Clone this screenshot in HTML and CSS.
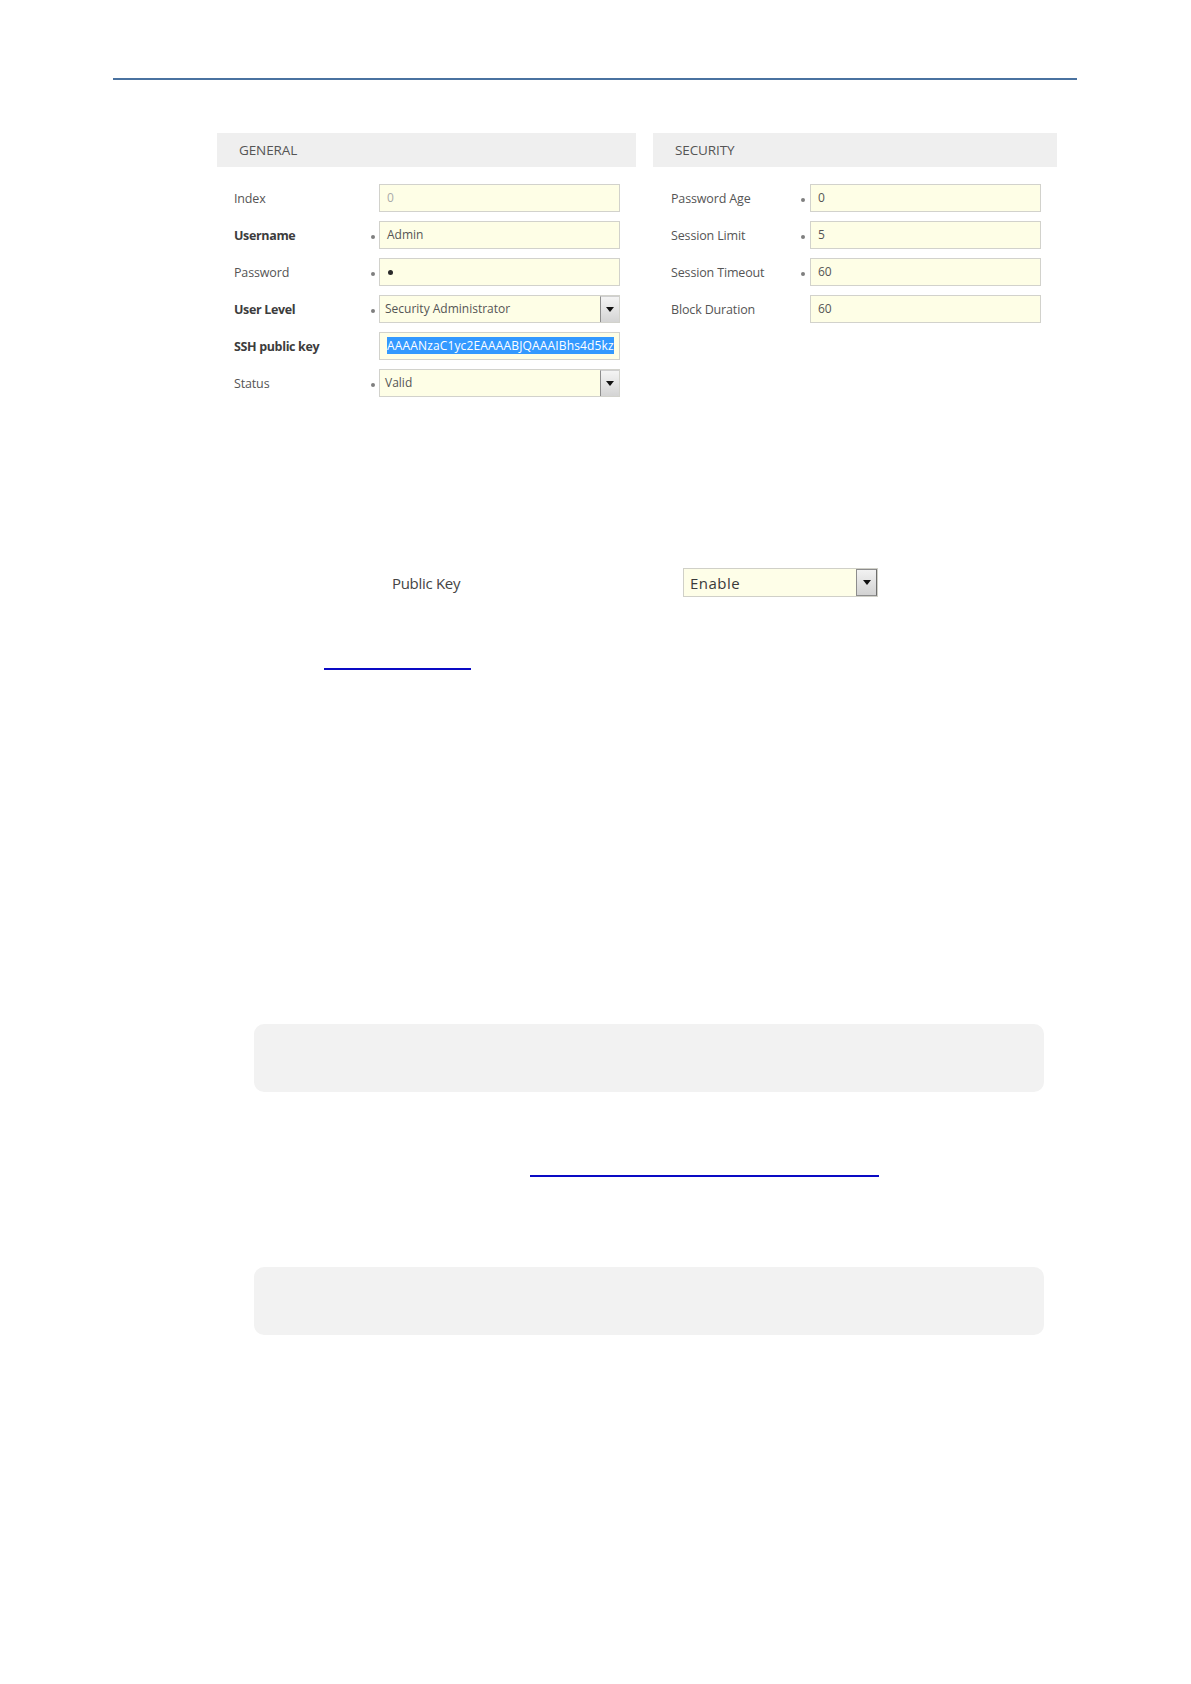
FILE: index.html
```html
<!DOCTYPE html>
<html>
<head>
<meta charset="utf-8">
<link rel="stylesheet" href="styles.css">
</head>
<body>
<div class="page">
  <div class="topline"></div>

  <div class="form">
    <div class="panel panel-general">
      <div class="panel-head">GENERAL</div>
      <div class="rows">
        <div class="row">
          <div class="label">Index</div><div class="dot-cell"></div>
          <div class="field disabled">0</div>
        </div>
        <div class="row">
          <div class="label bold">Username</div><div class="dot-cell"><span class="dot"></span></div>
          <div class="field">Admin</div>
        </div>
        <div class="row">
          <div class="label">Password</div><div class="dot-cell"><span class="dot"></span></div>
          <div class="field pw"><span class="pwdot" aria-label="•"></span></div>
        </div>
        <div class="row">
          <div class="label bold">User Level</div><div class="dot-cell"><span class="dot"></span></div>
          <div class="field select"><span class="val">Security Administrator</span><span class="arrow"><span class="tri"></span></span></div>
        </div>
        <div class="row">
          <div class="label bold">SSH public key</div><div class="dot-cell"></div>
          <div class="field ssh"><span class="sel">AAAANzaC1yc2EAAAABJQAAAIBhs4d5kz</span></div>
        </div>
        <div class="row">
          <div class="label">Status</div><div class="dot-cell"><span class="dot"></span></div>
          <div class="field select"><span class="val">Valid</span><span class="arrow"><span class="tri"></span></span></div>
        </div>
      </div>
    </div>

    <div class="panel panel-security">
      <div class="panel-head">SECURITY</div>
      <div class="rows">
        <div class="row">
          <div class="label">Password Age</div><div class="dot-cell"><span class="dot"></span></div>
          <div class="field">0</div>
        </div>
        <div class="row">
          <div class="label">Session Limit</div><div class="dot-cell"><span class="dot"></span></div>
          <div class="field">5</div>
        </div>
        <div class="row">
          <div class="label">Session Timeout</div><div class="dot-cell"><span class="dot"></span></div>
          <div class="field">60</div>
        </div>
        <div class="row">
          <div class="label">Block Duration</div><div class="dot-cell"></div>
          <div class="field">60</div>
        </div>
      </div>
    </div>
  </div>

  <div class="pk-row">
    <div class="pk-label">Public Key</div>
    <div class="pk-select"><span class="val">Enable</span><span class="pk-arrow"><span class="tri"></span></span></div>
  </div>

  <div class="link link-1"></div>

  <div class="note note-1"></div>

  <div class="link link-2"></div>

  <div class="note note-2"></div>
</div>
</body>
</html>
```

FILE: styles.css
```css
html, body {
  margin: 0;
  padding: 0;
  background: #ffffff;
}

body {
  font-family: "Open Sans", "Noto Sans", "DejaVu Sans", sans-serif;
  color: #555;
}

.page {
  width: 1191px;
  min-height: 1684px;
  padding-top: 78px;
  box-sizing: border-box;
}

.topline {
  margin-left: 113px;
  width: 964px;
  height: 2px;
  background: #4a72a0;
}

/* ---------- form screenshot ---------- */
.form {
  margin-top: 53px;
  margin-left: 217px;
  display: flex;
  gap: 17px;
  align-items: flex-start;
}

.panel-general { width: 419px; }
.panel-security { width: 404px; }

.panel-head {
  height: 34px;
  background: #efefef;
  font-size: 13.5px;
  line-height: 34px;
  padding-left: 22px;
  color: #555;
  letter-spacing: -0.1px;
}

.rows {
  margin-top: 17px;
  display: flex;
  flex-direction: column;
  gap: 9px;
}

.row {
  display: grid;
  height: 28px;
  align-items: center;
}

.panel-general .row {
  grid-template-columns: 132px 13px 241px;
  padding-left: 17px;
}

.panel-security .row {
  grid-template-columns: 125px 14px 231px;
  padding-left: 18px;
}

.label {
  font-size: 12.5px;
  color: #555;
  letter-spacing: -0.15px;
  white-space: nowrap;
}

.label.bold {
  font-weight: 700;
  color: #3c3c3c;
  letter-spacing: -0.35px;
}

.dot-cell {
  display: flex;
  align-items: center;
  justify-content: center;
  height: 28px;
  padding-top: 3px;
  box-sizing: border-box;
}

.dot {
  width: 4px;
  height: 4px;
  border-radius: 50%;
  background: #7f7f7f;
}

.field {
  height: 28px;
  box-sizing: border-box;
  border: 1px solid #d2d2cc;
  background: #fefee6;
  font-size: 12px;
  line-height: 26px;
  padding-left: 7px;
  color: #555;
  white-space: nowrap;
  overflow: hidden;
  position: relative;
}

.field.disabled { color: #aaa; }

.field.pw {
  display: flex;
  align-items: center;
  padding-left: 8px;
  padding-top: 1px;
}

.pwdot {
  width: 5px;
  height: 5px;
  border-radius: 50%;
  background: #2a2a2a;
}

.field.select {
  display: flex;
  justify-content: space-between;
  padding-left: 5px;
}

.arrow {
  width: 19px;
  height: 26px;
  box-sizing: border-box;
  border-left: 1px solid #8d8d8d;
  border-top: 1px solid #cfcfcf;
  background: linear-gradient(#f4f4f4, #d4d4d4);
  display: flex;
  align-items: center;
  justify-content: center;
}

.tri {
  width: 0;
  height: 0;
  border-left: 4px solid transparent;
  border-right: 4px solid transparent;
  border-top: 5px solid #111;
}

.field.ssh {
  padding-left: 7px;
}

.sel {
  background: #3399ff;
  color: #ffffff;
  padding: 1px 0;
  line-height: 15px;
  display: inline-block;
  letter-spacing: 0.15px;
}

/* ---------- public key row ---------- */
.pk-row {
  margin-top: 171px;
  display: flex;
  align-items: center;
  height: 29px;
  padding-left: 392px;
}

.pk-label {
  width: 291px;
  font-size: 15px;
  color: #444;
  letter-spacing: -0.3px;
}

.pk-select {
  width: 195px;
  height: 29px;
  box-sizing: border-box;
  border: 1px solid #d0d0c8;
  background: #fefee8;
  display: flex;
  justify-content: space-between;
  align-items: center;
  padding-left: 6px;
}

.pk-select .val {
  font-size: 15px;
  color: #3a3a3a;
  letter-spacing: 0.5px;
}

.pk-arrow {
  width: 21px;
  height: 27px;
  box-sizing: border-box;
  border: 1px solid #8d8d8d;
  border-right-color: #6d6d6d;
  background: linear-gradient(#f2f2f2, #d2d2d2);
  display: flex;
  align-items: center;
  justify-content: center;
}

/* ---------- document body ---------- */
.link {
  height: 2px;
  background: #0a0ac4;
}

.link-1 {
  margin-top: 71px;
  margin-left: 324px;
  width: 147px;
}

.link-2 {
  margin-top: 83px;
  margin-left: 530px;
  width: 349px;
}

.note {
  margin-left: 254px;
  width: 790px;
  height: 68px;
  background: #f2f2f2;
  border-radius: 10px;
}

.note-1 { margin-top: 354px; }
.note-2 { margin-top: 90px; }
```
